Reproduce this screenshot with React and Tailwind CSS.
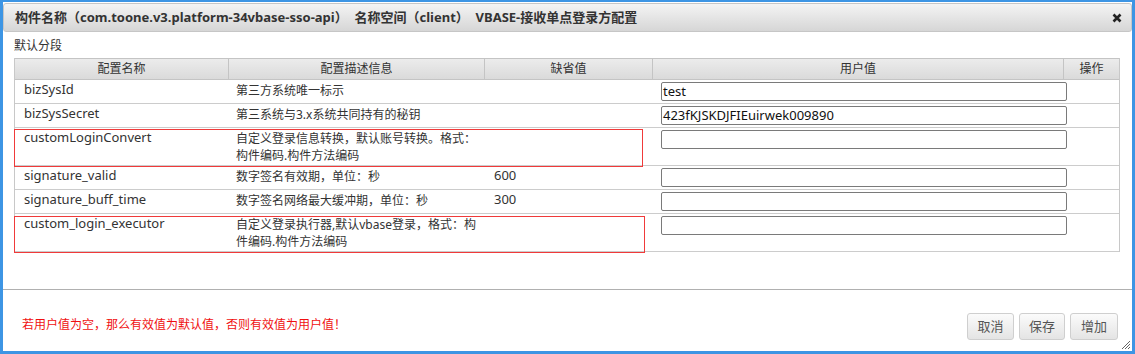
import React from "react";

const font = { fontFamily: '"Noto Sans", "Noto Sans CJK SC", sans-serif' };

const rows = [
  { name: "bizSysId", desc: ["第三方系统唯一标示"], def: "", val: "test", tall: false },
  { name: "bizSysSecret", desc: ["第三系统与3.x系统共同持有的秘钥"], def: "", val: "423fKJSKDJFIEuirwek009890", tall: false },
  { name: "customLoginConvert", desc: ["自定义登录信息转换，默认账号转换。格式：", "构件编码.构件方法编码"], def: "", val: "", tall: true },
  { name: "signature_valid", desc: ["数字签名有效期，单位：秒"], def: "600", val: "", tall: false },
  { name: "signature_buff_time", desc: ["数字签名网络最大缓冲期，单位：秒"], def: "300", val: "", tall: false },
  { name: "custom_login_executor", desc: ["自定义登录执行器,默认vbase登录，格式：构", "件编码.构件方法编码"], def: "", val: "", tall: true },
];

function Btn({ children, w }) {
  return (
    <button
      className={`${w} h-[27px] rounded-[3px] border border-[#cfcfcf] bg-gradient-to-b from-[#fbfbfb] to-[#e4e4e4] text-[13px] text-[#555] leading-none`}
    >
      {children}
    </button>
  );
}

export default function App() {
  return (
    <div
      className="w-[1135px] h-[354px] border-[3px] border-t-[2px] border-[#3d95e4] bg-white flex flex-col relative"
      style={font}
    >
      {/* title bar */}
      <div className="mt-px h-[29px] shrink-0 rounded-[3px] border border-[#c6c6c6] bg-gradient-to-b from-[#f4f4f4] to-[#d6d6d6] flex items-center pl-[11px] pr-[9px]">
        <div className="text-[13px] font-bold text-[#333] whitespace-pre leading-none">
          构件名称（com.toone.v3.platform-34vbase-sso-api）  名称空间（client）  VBASE-接收单点登录方配置
        </div>
        <div className="ml-auto">
          <svg width="10" height="10" viewBox="0 0 10 10">
            <path d="M1.5 1.5 L8.5 8.5 M8.5 1.5 L1.5 8.5" stroke="#222" strokeWidth="2.6" strokeLinecap="butt" />
          </svg>
        </div>
      </div>

      {/* body */}
      <div className="flex-1 pl-[11px] pr-[12px]">
        <div className="h-[26px] pt-[6px] text-[12px] leading-[16px] text-[#333]">默认分段</div>
        <div className="relative w-[1106px] border-l border-r border-[#c8c8c8] text-[#333]">
          {/* header */}
          <div className="flex h-[22px] border-t border-b border-[#c4c4c4] bg-gradient-to-b from-[#ececec] to-[#dadada] text-[12px] leading-[20px]">
            <div className="w-[214px] text-center border-r border-[#c4c4c4]">配置名称</div>
            <div className="w-[256px] text-center border-r border-[#c4c4c4]">配置描述信息</div>
            <div className="w-[168px] text-center border-r border-[#c4c4c4]">缺省值</div>
            <div className="w-[411px] text-center border-r border-[#c4c4c4]">用户值</div>
            <div className="flex-1 text-center">操作</div>
          </div>
          {rows.map((r, i) => (
            <div
              key={i}
              className={`flex border-b border-[#cccccc] ${r.tall ? "h-[38px]" : "h-[24px]"}`}
            >
              <div className="w-[214px] pl-[9px] pt-[1px] text-[13px] leading-[17px]">{r.name}</div>
              <div className="w-[256px] pl-[7px] pt-[2px] text-[12px] leading-[17px]">
                {r.desc.map((d, j) => (
                  <div key={j}>{d}</div>
                ))}
              </div>
              <div className="w-[168px] pl-[9px] pt-[1px] text-[13px] leading-[17px]">{r.def}</div>
              <div className="w-[411px] pl-[8px] pt-[2px]">
                <div className="w-[406px] h-[19px] rounded-[2px] border border-[#7a7a7a] bg-white pl-[1px] text-[13px] leading-[17px] text-[#111]">
                  {r.val}
                </div>
              </div>
              <div className="flex-1" />
            </div>
          ))}
          {/* red annotation boxes */}
          <div className="absolute left-[-1px] top-[71px] w-[629px] h-[38px] border border-[#f03a3a] pointer-events-none" />
          <div className="absolute left-[-1px] top-[158px] w-[631px] h-[37px] border border-[#f03a3a] pointer-events-none" />
        </div>
      </div>

      {/* footer */}
      <div className="h-[62px] shrink-0 border-t border-[#b0b0b0] flex items-start pl-[19px] pr-[14px]">
        <div className="mt-[29px] text-[12px] text-[#f01010] leading-[12px]">
          若用户值为空，那么有效值为默认值，否则有效值为用户值！
        </div>
        <div className="ml-auto mt-[23px] flex gap-[5px]">
          <Btn w="w-[47px]">取消</Btn>
          <Btn w="w-[46px]">保存</Btn>
          <Btn w="w-[48px]">增加</Btn>
        </div>
      </div>

      {/* resize grip */}
      <svg className="absolute right-[1px] bottom-[1px]" width="10" height="10" viewBox="0 0 10 10">
        <path d="M9 1 L1 9 M9 4 L4 9 M9 7 L7 9" stroke="#666" strokeWidth="1" />
      </svg>
    </div>
  );
}
